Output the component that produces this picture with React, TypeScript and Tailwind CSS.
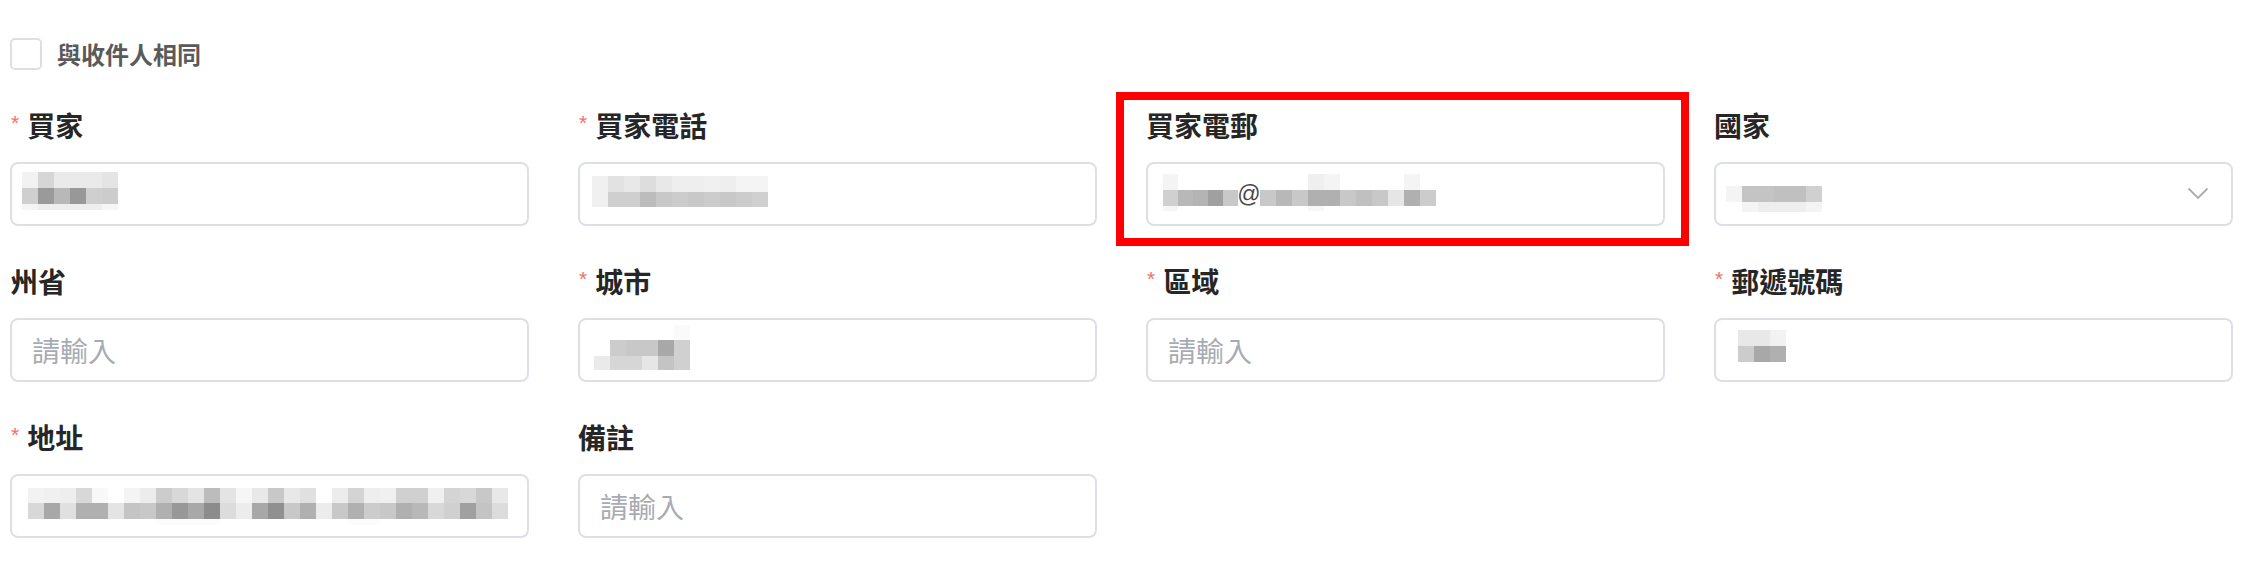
import React from "react";

type MosaicProps = { rows: string[]; heights: number[]; w?: number; className?: string };

function Mosaic({ rows, heights, w = 16, className }: MosaicProps) {
  const grid = rows.map((r) => r.trim().split(/\s+/));
  const cols = grid[0].length;
  const total = heights.reduce((a, b) => a + b, 0);
  let y = 0;
  return (
    <svg width={cols * w} height={total} className={className} shapeRendering="crispEdges">
      {grid.map((row, ri) => {
        const top = y;
        y += heights[ri];
        return row.map((v, ci) => (
          <rect key={`${ri}-${ci}`} x={ci * w} y={top} width={w} height={heights[ri]} fill={`#${v}${v}${v}`} />
        ));
      })}
    </svg>
  );
}

const CJK = "font-['Noto_Sans_CJK_TC','Noto_Sans',sans-serif]";

function Label({ text, required }: { text: string; required?: boolean }) {
  return (
    <div className="h-[56px] flex items-center">
      {required && (
        <span className="font-['Liberation_Sans',sans-serif] text-[21px] leading-none text-[#f56c6c] mr-[8px] mb-[5px] ml-[1px]">
          *
        </span>
      )}
      <span className={`${CJK} text-[28px] font-bold text-[#262626] leading-none`}>{text}</span>
    </div>
  );
}

function InputBox({ children, className = "" }: { children?: React.ReactNode; className?: string }) {
  return (
    <div className={`mt-[9px] h-[64px] border-2 border-[#dcdfe6] rounded-[8px] bg-white flex ${className}`}>
      {children}
    </div>
  );
}

function Placeholder() {
  return (
    <InputBox className="items-center pl-[20px]">
      <span className={`${CJK} text-[28px] text-[#a8abb2] leading-none`}>請輸入</span>
    </InputBox>
  );
}

export default function App() {
  return (
    <div className="relative w-[2258px] h-[578px] bg-white pl-[10px] pr-[25px] pt-[38px] overflow-hidden">
      <div className="flex items-center h-[32px]">
        <div className="w-[32px] h-[32px] border-2 border-[#dcdfe6] rounded-[5px] bg-white" />
        <span className={`${CJK} ml-[15px] text-[24px] font-bold text-[#5a5a5a] leading-none`}>與收件人相同</span>
      </div>

      <div className="mt-[27px] grid grid-cols-4 gap-x-[49px]">
        {/* Row 1 */}
        <div className="h-[156px]">
          <Label text="買家" required />
          <InputBox className="items-start">
            <Mosaic
              className="ml-[10px] mt-[8px]"
              heights={[16, 16, 6]}
              rows={["f2 d6 ea ea ea e4", "cf 9a b8 98 cf cc", "f4 ee ee ee ee f6"]}
            />
          </InputBox>
        </div>
        <div className="h-[156px]">
          <Label text="買家電話" required />
          <InputBox className="items-start">
            <Mosaic
              className="ml-[12px] mt-[12px]"
              heights={[16, 15]}
              rows={["f0 e2 e8 dd e8 ee ee f0 ee f4 f4", "f0 cf cf bc c8 cc c8 cc c8 cc d0"]}
            />
          </InputBox>
        </div>
        <div className="h-[156px]">
          <Label text="買家電郵" />
          <InputBox className="items-start">
            <div className="flex items-start ml-[15px] mt-[10px]">
              <Mosaic
                w={15}
                heights={[16, 16, 5]}
                rows={["f4 ff ff ff ff", "d0 b8 b4 a0 c8", "f6 ff ff ff ff"]}
              />
              <span className="w-[22px] flex justify-center mt-[9px] font-['Liberation_Sans',sans-serif] text-[23px] leading-none text-[#4a4a4a]">
                @
              </span>
              <Mosaic
                heights={[16, 16, 5]}
                rows={[
                  "ff ff ff ef f4 ff ff ff ff f4 ff",
                  "c8 b8 c8 b0 b0 c8 c0 c8 e6 b0 cc",
                  "ff ff ff f8 ff ff ff ff ff ff ff",
                ]}
              />
            </div>
          </InputBox>
        </div>
        <div className="h-[156px]">
          <Label text="國家" />
          <InputBox className="items-start justify-between">
            <Mosaic
              className="ml-[10px] mt-[22px]"
              heights={[16, 10]}
              rows={["f4 c4 c4 c0 c0 d0", "ff f4 ee ee ee f4"]}
            />
            <svg width="22" height="13" viewBox="0 0 22 13" className="mr-[22px] mt-[23px]">
              <polyline points="1.5,1.5 11,11 20.5,1.5" fill="none" stroke="#a8abb2" strokeWidth="1.8" />
            </svg>
          </InputBox>
        </div>

        {/* Row 2 */}
        <div className="h-[156px]">
          <Label text="州省" />
          <Placeholder />
        </div>
        <div className="h-[156px]">
          <Label text="城市" required />
          <InputBox className="items-start">
            <Mosaic
              className="ml-[14px] mt-[5px]"
              heights={[15, 16, 14]}
              rows={["ff ff ff ff ff fa", "ff cc c8 c8 a8 d0", "ea d6 d6 e6 c4 d0"]}
            />
          </InputBox>
        </div>
        <div className="h-[156px]">
          <Label text="區域" required />
          <Placeholder />
        </div>
        <div className="h-[156px]">
          <Label text="郵遞號碼" required />
          <InputBox className="items-start">
            <Mosaic className="ml-[22px] mt-[10px]" heights={[16, 16]} rows={["e8 e8 f2", "cc a8 b0"]} />
          </InputBox>
        </div>

        {/* Row 3 */}
        <div className="h-[156px]">
          <Label text="地址" required />
          <InputBox className="items-start">
            <Mosaic
              className="ml-[16px] mt-[12px]"
              heights={[15, 16, 6]}
              rows={[
                "f2 f0 ee d8 f8 ff f4 ec cc d8 e4 bc e4 f6 e8 c8 e8 e0 ff ec d4 ee f0 d0 d0 f0 d4 d8 c8 e8",
                "d8 a8 e0 b0 b0 e4 c4 c8 b0 98 a8 8c dc ec a8 90 c8 b0 ec c8 b0 cc c8 b0 b8 d8 d0 a0 c4 dc",
                "ff ff ff ff ff ff ff ff fc fc fc fc ff ff ff ff ff ff ff ff fc fc ff ff ff ff ff ff ff ff",
              ]}
            />
          </InputBox>
        </div>
        <div className="h-[156px]">
          <Label text="備註" />
          <Placeholder />
        </div>
      </div>

      {/* annotation frame */}
      <div className="absolute left-[1116px] top-[92px] w-[573px] h-[154px] border-[8px] border-[#ff0000] pointer-events-none" />
    </div>
  );
}
